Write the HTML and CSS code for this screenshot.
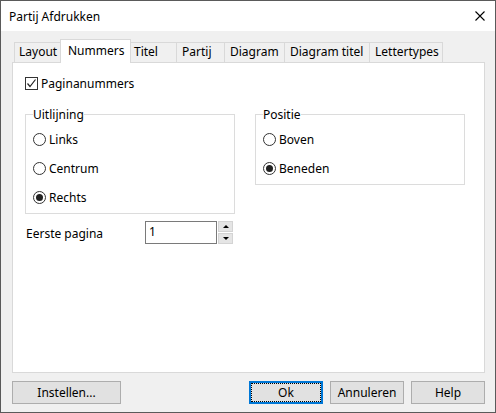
FILE: index.html
```html
<!DOCTYPE html>
<html>
<head>
<meta charset="utf-8">
<title>Partij Afdrukken</title>
<link rel="stylesheet" href="styles.css">
</head>
<body>
<div class="window">
  <div class="titlebar">
    <span class="title">Partij Afdrukken</span>
    <svg class="close" width="10" height="10" viewBox="0 0 10 10"><path d="M0.5 0.5 L9.5 9.5 M9.5 0.5 L0.5 9.5" stroke="#000" stroke-width="1.1" fill="none"/></svg>
  </div>
  <div class="content">
    <div class="tabs">
      <div class="tab t-layout">Layout</div>
      <div class="tab active t-nummers">Nummers</div>
      <div class="tab t-titel">Titel</div>
      <div class="tab t-partij">Partij</div>
      <div class="tab t-diagram">Diagram</div>
      <div class="tab t-dtitel">Diagram titel</div>
      <div class="tab t-letter">Lettertypes</div>
    </div>
    <div class="panel">
      <div class="check-row">
        <span class="checkbox"><svg width="11" height="11" viewBox="0 0 11 11"><path d="M1.5 5.5 L4 8.5 L9.5 1.5" stroke="#222" stroke-width="1.2" fill="none"/></svg></span>
        <span>Paginanummers</span>
      </div>
      <div class="groups">
        <fieldset class="group">
          <legend>Uitlijning</legend>
          <div class="radio-row"><span class="radio"></span>Links</div>
          <div class="radio-row"><span class="radio"></span>Centrum</div>
          <div class="radio-row"><span class="radio checked"></span>Rechts</div>
        </fieldset>
        <fieldset class="group">
          <legend>Positie</legend>
          <div class="radio-row"><span class="radio"></span>Boven</div>
          <div class="radio-row"><span class="radio checked"></span>Beneden</div>
        </fieldset>
      </div>
      <div class="field-row">
        <span class="field-label">Eerste pagina</span>
        <div class="input">1</div>
        <div class="spin">
          <div class="spin-btn"><span class="arrow-up"></span></div>
          <div class="spin-btn"><span class="arrow-down"></span></div>
        </div>
      </div>
    </div>
    <div class="buttons">
      <button class="btn btn-wide">Instellen...</button>
      <div class="spacer"></div>
      <button class="btn btn-default">Ok</button>
      <button class="btn">Annuleren</button>
      <button class="btn">Help</button>
    </div>
  </div>
</div>
</body>
</html>
```

FILE: styles.css
```css
* { box-sizing: border-box; }
html, body { margin: 0; padding: 0; background: #f0f0f0; }
body {
  font-family: "Noto Sans", "Open Sans", sans-serif;
  font-size: 12px;
  color: #000;
}
.window {
  width: 496px;
  height: 413px;
  border: 1px solid #5a5a5a;
  background: #f0f0f0;
  display: flex;
  flex-direction: column;
}
.titlebar {
  height: 30px;
  background: #fff;
  display: flex;
  align-items: center;
  padding: 0 10px 0 8px;
  flex-shrink: 0;
}
.title { flex: 1; line-height: 17px; margin-top: 1px; }
.close { display: block; }
.content {
  flex: 1;
  padding: 0 10px 0 11px;
  display: flex;
  flex-direction: column;
}
.tabs {
  margin-top: 11px;
  padding-left: 2px;
  display: flex;
  align-items: flex-end;
  height: 20px;
}
.tab {
  height: 20px;
  border: 1px solid #d9d9d9;
  border-bottom: none;
  background: #f0f0f0;
  line-height: 18px;
  padding-left: 5px;
  white-space: nowrap;
  margin-left: -1px;
}
.tab.t-layout { width: 49px; margin-left: 0; padding-left: 4px; }
.tab.active {
  width: 71px;
  height: 24px;
  margin-left: -3px;
  margin-right: -2px;
  margin-bottom: -1px;
  background: #fff;
  z-index: 2;
  padding-left: 7px;
  line-height: 21px;
}
.t-titel { width: 49px; }
.t-partij { width: 49px; }
.t-diagram { width: 61px; }
.t-dtitel { width: 86px; }
.t-letter { width: 74px; }
.panel {
  height: 311px;
  border: 1px solid #d9d9d9;
  background: #fff;
  padding: 12px 12px 0 12px;
}
.check-row {
  height: 17px;
  display: flex;
  align-items: center;
  gap: 3px;
}
.checkbox {
  width: 13px;
  height: 13px;
  border: 1px solid #333;
  background: #fff;
  display: flex;
  align-items: center;
  justify-content: center;
}
.checkbox svg { display: block; }
.groups {
  margin-top: 14px;
  display: flex;
  align-items: flex-start;
  gap: 20px;
}
.group {
  width: 210px;
  min-width: 0;
  margin: 0;
  border: 1px solid #dcdcdc;
  padding: 8px 7px 7px 7px;
  display: flex;
  flex-direction: column;
  gap: 12px;
}
.group legend {
  padding: 0;
  line-height: 17px;
}
.radio-row {
  height: 17px;
  display: flex;
  align-items: center;
  gap: 3px;
}
.radio {
  width: 13px;
  height: 13px;
  border: 1px solid #333;
  border-radius: 50%;
  background: #fff;
  display: flex;
  align-items: center;
  justify-content: center;
}
.radio.checked::after {
  content: "";
  width: 7px;
  height: 7px;
  border-radius: 50%;
  background: #222;
}
.field-row {
  margin-top: 7px;
  height: 23px;
  display: flex;
  align-items: center;
}
.field-label { width: 120px; padding-left: 1px; margin-top: 2px; }
.input {
  width: 72px;
  height: 23px;
  border: 1px solid #7a7a7a;
  background: #fff;
  padding-left: 3px;
  line-height: 20px;
}
.spin {
  margin-left: 1px;
  width: 15px;
  height: 23px;
  display: flex;
  flex-direction: column;
  gap: 1px;
}
.spin-btn {
  height: 11px;
  background: #e5e5e5;
  border: 1px solid #d4d4d4;
  display: flex;
  align-items: center;
  justify-content: center;
}
.arrow-up, .arrow-down {
  width: 0; height: 0;
  border-left: 3px solid transparent;
  border-right: 3px solid transparent;
}
.arrow-up { border-bottom: 3px solid #000; }
.arrow-down { border-top: 3px solid #000; }
.buttons {
  margin-top: 8px;
  height: 23px;
  display: flex;
}
.spacer { flex: 1; }
.btn {
  width: 74px;
  height: 23px;
  margin: 0 0 0 7px;
  padding: 0;
  border: 1px solid #adadad;
  background: #e1e1e1;
  font-family: inherit;
  font-size: 12px;
  color: #000;
  text-align: center;
}
.btn-wide { width: 109px; margin-left: 0; }
.btn-default {
  margin-left: 0;
  border: 2px solid #0078d7;
  outline: 1px dotted #000;
  outline-offset: -3px;
}
```
